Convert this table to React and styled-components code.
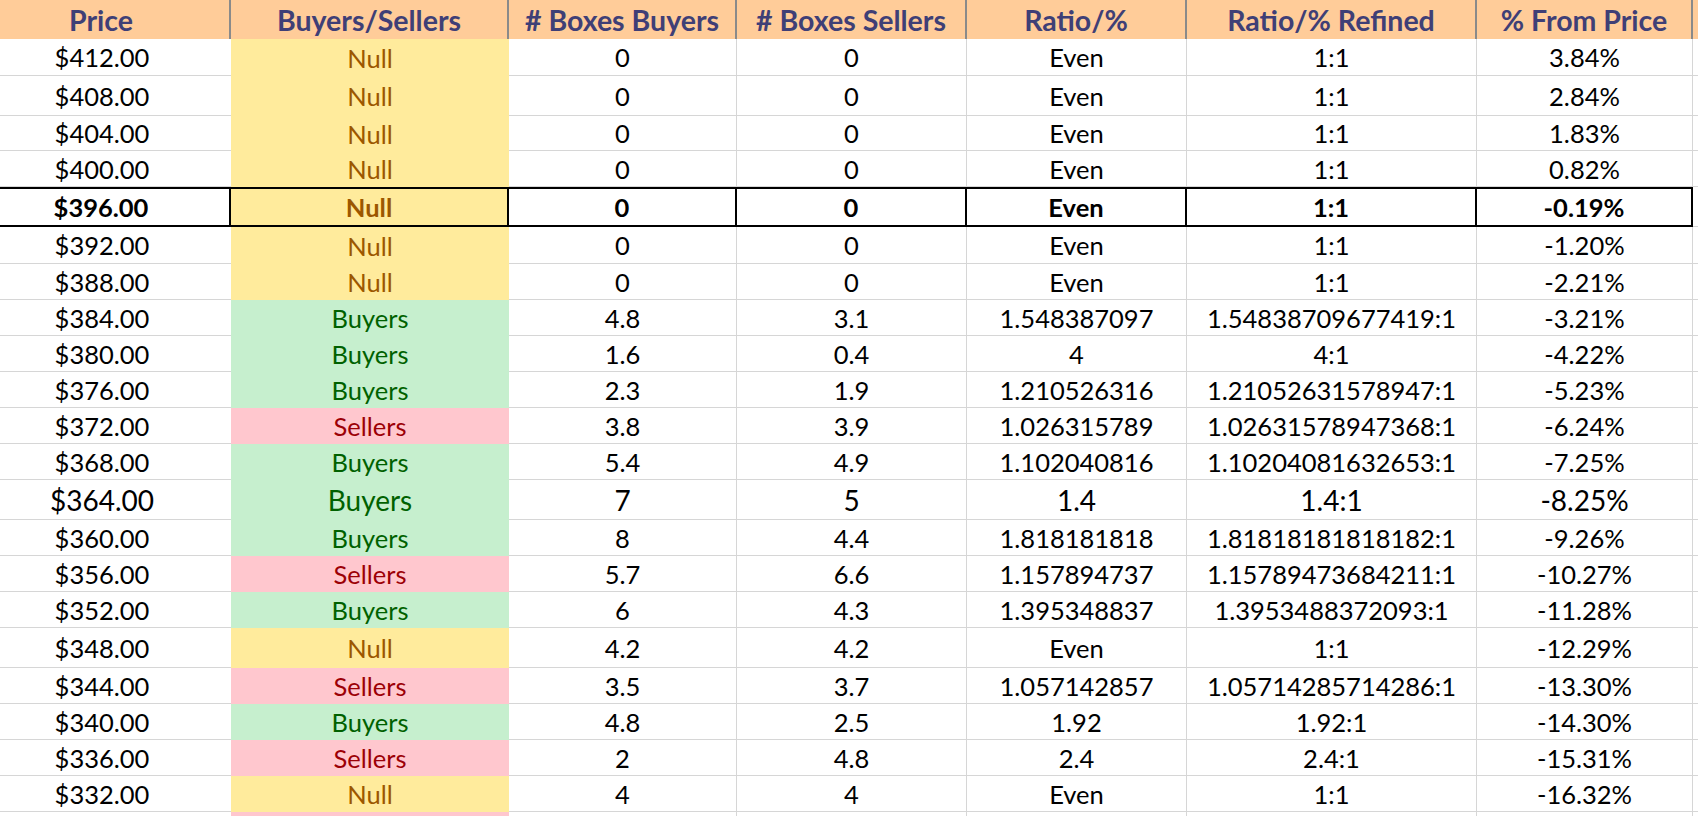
import React from 'react'
import styled, { createGlobalStyle, css } from 'styled-components'

const GlobalStyle = createGlobalStyle`
  html, body {
    margin: 0;
    background: #ffffff;
    overflow: hidden;
  }
  * {
    box-sizing: border-box;
  }
`

const COLS = '231px 278px 228px 230px 220px 290px 216px 1fr'

const Sheet = styled.div`
  width: 1698px;
  font-family: 'Lato', 'Open Sans', sans-serif;
  color: #000;
`

const HeaderRow = styled.div`
  display: grid;
  grid-template-columns: ${COLS};
  height: 39px;
  background: #ffcc99;
`

const HeaderCell = styled.div`
  display: flex;
  align-items: center;
  justify-content: center;
  padding-right: ${(p) => p.$shift || 0}px;
  border-right: 2px solid #8a8a8a;
  color: #3f3f76;
  font-size: 28.5px;
  font-weight: 700;
  white-space: nowrap;
`

const Row = styled.div`
  display: grid;
  grid-template-columns: ${COLS};
  height: ${(p) => p.$h}px;
  font-size: ${(p) => (p.$big ? 28 : 25.5)}px;
  font-weight: ${(p) => (p.$bold ? 700 : 400)};
`

const Cell = styled.div`
  display: flex;
  align-items: center;
  justify-content: center;
  padding-right: ${(p) => p.$shift || 0}px;
  white-space: nowrap;
  border-right: ${(p) => (p.$noRight ? 'none' : '1px solid #d6d6d6')};
  border-bottom: 1px solid #d6d6d6;

  ${(p) =>
    p.$bold &&
    css`
      border-top: 2px solid #000;
      border-bottom: 2px solid #000;
      border-right: 2px solid #000;
    `}
`

const tones = {
  Null: { bg: '#ffeb9c', fg: '#9c5700' },
  Buyers: { bg: '#c6efce', fg: '#006100' },
  Sellers: { bg: '#ffc7ce', fg: '#9c0006' },
}

const StatusCell = styled.div`
  display: flex;
  align-items: center;
  justify-content: center;
  background: ${(p) => tones[p.$kind].bg};
  color: ${(p) => tones[p.$kind].fg};

  ${(p) =>
    p.$bold &&
    css`
      border: 2px solid #000;
      border-left: none;
    `}
`

const FillerCell = styled.div`
  border-bottom: 1px solid #d6d6d6;
`

const headers = [
  'Price',
  'Buyers/Sellers',
  '# Boxes Buyers',
  '# Boxes Sellers',
  'Ratio/%',
  'Ratio/% Refined',
  '% From Price',
]

// price, side, buyers, sellers, ratio, refined, from price, row height
const rows = [
  ['$412.00', 'Null', '0', '0', 'Even', '1:1', '3.84%', 37],
  ['$408.00', 'Null', '0', '0', 'Even', '1:1', '2.84%', 40],
  ['$404.00', 'Null', '0', '0', 'Even', '1:1', '1.83%', 35],
  ['$400.00', 'Null', '0', '0', 'Even', '1:1', '0.82%', 36],
  ['$396.00', 'Null', '0', '0', 'Even', '1:1', '-0.19%', 40, 'bold'],
  ['$392.00', 'Null', '0', '0', 'Even', '1:1', '-1.20%', 37],
  ['$388.00', 'Null', '0', '0', 'Even', '1:1', '-2.21%', 36],
  ['$384.00', 'Buyers', '4.8', '3.1', '1.548387097', '1.54838709677419:1', '-3.21%', 36],
  ['$380.00', 'Buyers', '1.6', '0.4', '4', '4:1', '-4.22%', 36],
  ['$376.00', 'Buyers', '2.3', '1.9', '1.210526316', '1.21052631578947:1', '-5.23%', 36],
  ['$372.00', 'Sellers', '3.8', '3.9', '1.026315789', '1.02631578947368:1', '-6.24%', 36],
  ['$368.00', 'Buyers', '5.4', '4.9', '1.102040816', '1.10204081632653:1', '-7.25%', 36],
  ['$364.00', 'Buyers', '7', '5', '1.4', '1.4:1', '-8.25%', 40, 'big'],
  ['$360.00', 'Buyers', '8', '4.4', '1.818181818', '1.81818181818182:1', '-9.26%', 36],
  ['$356.00', 'Sellers', '5.7', '6.6', '1.157894737', '1.15789473684211:1', '-10.27%', 36],
  ['$352.00', 'Buyers', '6', '4.3', '1.395348837', '1.3953488372093:1', '-11.28%', 36],
  ['$348.00', 'Null', '4.2', '4.2', 'Even', '1:1', '-12.29%', 40],
  ['$344.00', 'Sellers', '3.5', '3.7', '1.057142857', '1.05714285714286:1', '-13.30%', 36],
  ['$340.00', 'Buyers', '4.8', '2.5', '1.92', '1.92:1', '-14.30%', 36],
  ['$336.00', 'Sellers', '2', '4.8', '2.4', '2.4:1', '-15.31%', 36],
  ['$332.00', 'Null', '4', '4', 'Even', '1:1', '-16.32%', 36],
]

// the next row only peeks in at the bottom edge, so just its fill shows
const peekRow = { side: 'Sellers', h: 36 }

const App = () => {
  return (
    <Sheet>
      <GlobalStyle />
      <HeaderRow>
        {headers.map((h, i) => (
          <HeaderCell key={h} $shift={i === 0 ? 27 : 0}>
            {h}
          </HeaderCell>
        ))}
        <div />
      </HeaderRow>
      {rows.map(([price, side, buy, sell, ratio, refined, from, h, flag]) => {
        const bold = flag === 'bold'
        return (
          <Row key={price} $h={h} $bold={bold} $big={flag === 'big'}>
            <Cell $shift={27} $noRight $bold={bold}>
              {price}
            </Cell>
            <StatusCell $kind={side} $bold={bold}>
              {side}
            </StatusCell>
            <Cell $bold={bold}>{buy}</Cell>
            <Cell $bold={bold}>{sell}</Cell>
            <Cell $bold={bold}>{ratio}</Cell>
            <Cell $bold={bold}>{refined}</Cell>
            <Cell $bold={bold}>{from}</Cell>
            <FillerCell />
          </Row>
        )
      })}
      <Row $h={peekRow.h}>
        <Cell $noRight />
        <StatusCell $kind={peekRow.side} />
        <Cell />
        <Cell />
        <Cell />
        <Cell />
        <Cell />
        <FillerCell />
      </Row>
    </Sheet>
  )
}

export default App
